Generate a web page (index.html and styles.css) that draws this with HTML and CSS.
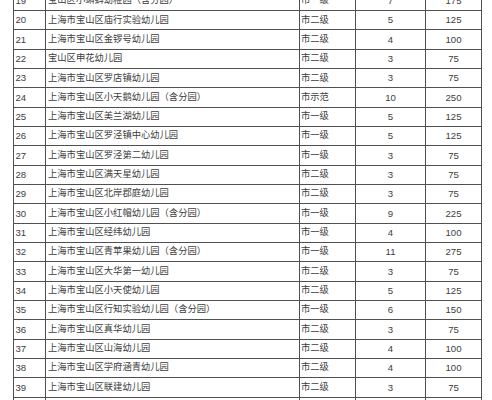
FILE: index.html
```html
<!DOCTYPE html>
<html lang="zh-CN">
<head>
<meta charset="utf-8">
<link rel="stylesheet" href="styles.css">
</head>
<body>
<div class="sheet">
<table class="list">
<colgroup><col class="c-no"><col class="c-name"><col class="c-level"><col class="c-count"><col class="c-total"></colgroup>
<tbody>
<tr><td class="no">19</td><td class="name">宝山区小蝌蚪幼稚园（含分园）</td><td class="level">市一级</td><td class="num">7</td><td class="num">175</td></tr>
<tr><td class="no">20</td><td class="name">上海市宝山区庙行实验幼儿园</td><td class="level">市二级</td><td class="num">5</td><td class="num">125</td></tr>
<tr><td class="no">21</td><td class="name">上海市宝山区金锣号幼儿园</td><td class="level">市二级</td><td class="num">4</td><td class="num">100</td></tr>
<tr><td class="no">22</td><td class="name">宝山区申花幼儿园</td><td class="level">市二级</td><td class="num">3</td><td class="num">75</td></tr>
<tr><td class="no">23</td><td class="name">上海市宝山区罗店镇幼儿园</td><td class="level">市二级</td><td class="num">3</td><td class="num">75</td></tr>
<tr><td class="no">24</td><td class="name">上海市宝山区小天鹅幼儿园（含分园）</td><td class="level">市示范</td><td class="num">10</td><td class="num">250</td></tr>
<tr><td class="no">25</td><td class="name">上海市宝山区美兰湖幼儿园</td><td class="level">市一级</td><td class="num">5</td><td class="num">125</td></tr>
<tr><td class="no">26</td><td class="name">上海市宝山区罗泾镇中心幼儿园</td><td class="level">市一级</td><td class="num">5</td><td class="num">125</td></tr>
<tr><td class="no">27</td><td class="name">上海市宝山区罗泾第二幼儿园</td><td class="level">市一级</td><td class="num">3</td><td class="num">75</td></tr>
<tr><td class="no">28</td><td class="name">上海市宝山区满天星幼儿园</td><td class="level">市二级</td><td class="num">3</td><td class="num">75</td></tr>
<tr><td class="no">29</td><td class="name">上海市宝山区北岸郡庭幼儿园</td><td class="level">市二级</td><td class="num">3</td><td class="num">75</td></tr>
<tr><td class="no">30</td><td class="name">上海市宝山区小红帽幼儿园（含分园）</td><td class="level">市一级</td><td class="num">9</td><td class="num">225</td></tr>
<tr><td class="no">31</td><td class="name">上海市宝山区经纬幼儿园</td><td class="level">市一级</td><td class="num">4</td><td class="num">100</td></tr>
<tr><td class="no">32</td><td class="name">上海市宝山区青苹果幼儿园（含分园）</td><td class="level">市一级</td><td class="num">11</td><td class="num">275</td></tr>
<tr><td class="no">33</td><td class="name">上海市宝山区大华第一幼儿园</td><td class="level">市二级</td><td class="num">3</td><td class="num">75</td></tr>
<tr><td class="no">34</td><td class="name">上海市宝山区小天使幼儿园</td><td class="level">市二级</td><td class="num">5</td><td class="num">125</td></tr>
<tr><td class="no">35</td><td class="name">上海市宝山区行知实验幼儿园（含分园）</td><td class="level">市一级</td><td class="num">6</td><td class="num">150</td></tr>
<tr><td class="no">36</td><td class="name">上海市宝山区真华幼儿园</td><td class="level">市二级</td><td class="num">3</td><td class="num">75</td></tr>
<tr><td class="no">37</td><td class="name">上海市宝山区山海幼儿园</td><td class="level">市二级</td><td class="num">4</td><td class="num">100</td></tr>
<tr><td class="no">38</td><td class="name">上海市宝山区学府涵青幼儿园</td><td class="level">市二级</td><td class="num">4</td><td class="num">100</td></tr>
<tr><td class="no">39</td><td class="name">上海市宝山区联建幼儿园</td><td class="level">市二级</td><td class="num">3</td><td class="num">75</td></tr>
<tr><td class="no"></td><td class="name"></td><td class="level"></td><td class="num"></td><td class="num"></td></tr>
</tbody>
</table>
</div>
</body>
</html>
```

FILE: styles.css
```css
html, body {
  margin: 0;
  padding: 0;
  background: #ffffff;
}
body {
  height: 400px;
  overflow: hidden;
}
.sheet {
  padding-left: 13px;
}
.list {
  margin-top: -9.33px;
  border-collapse: collapse;
  table-layout: fixed;
  width: 468px;
  font-family: "Liberation Sans", "Noto Sans CJK SC", sans-serif;
  font-size: 9.3px;
  line-height: 1;
  color: #3d3d3d;
}
.c-no { width: 32px; }
.c-name { width: 254px; }
.c-level { width: 56px; }
.c-count { width: 70px; }
.c-total { width: 56px; }
.list tr {
  height: 19.333px;
}
.list td {
  border: 1px solid #505050;
  padding: 0 2px;
  vertical-align: middle;
  white-space: nowrap;
  overflow: hidden;
}
.list td.no {
  padding-left: 1.5px;
  font-size: 9.6px;
}
.list td.level {
  padding-left: 1px;
}
.list td.num {
  text-align: center;
  font-size: 9.6px;
}
```
